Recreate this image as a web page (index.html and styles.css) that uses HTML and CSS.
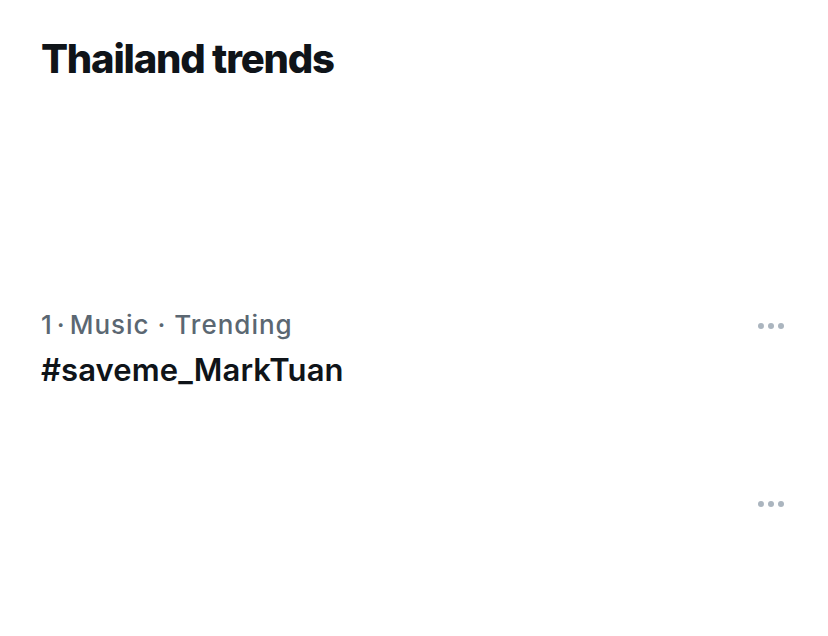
FILE: index.html
```html
<!DOCTYPE html>
<html lang="en">
<head>
<meta charset="utf-8">
<link rel="stylesheet" href="styles.css">
<title>Thailand trends</title>
</head>
<body>
<main class="panel">
  <h1 class="title">Thailand trends</h1>
  <div class="blank-row"></div>
  <div class="trend">
    <div class="trend-text">
      <div class="meta">1<span class="sep1">·</span>Music · Trending</div>
      <div class="name">#saveme_MarkTuan</div>
    </div>
    <span class="more"><i></i><i></i><i></i></span>
  </div>
  <div class="trend trend-faded">
    <div class="trend-text"></div>
    <span class="more"><i></i><i></i><i></i></span>
  </div>
</main>
</body>
</html>
```
FILE: styles.css
```css
html, body {
  margin: 0;
  padding: 0;
  background: #ffffff;
}
body {
  font-family: Inter, "Noto Sans", "Liberation Sans", sans-serif;
  color: #0f1419;
}
.panel {
  width: 828px;
  height: 636px;
  box-sizing: border-box;
  padding: 36px 44px 0 41px;
  display: flex;
  flex-direction: column;
}
.title {
  margin: 0;
  font-size: 40px;
  font-weight: 800;
  letter-spacing: -1.2px;
  line-height: 46px;
  color: #0f1419;
}
.blank-row {
  height: 226px;
}
.trend {
  display: flex;
  justify-content: space-between;
  align-items: flex-start;
}
.trend-text {
  display: flex;
  flex-direction: column;
}
.meta {
  font-size: 26px;
  line-height: 34px;
  letter-spacing: 1px;
  color: #5b6772;
  font-weight: 500;
}
.sep1 {
  margin: 0 4px;
}
.name {
  margin-top: 5px;
  font-size: 31px;
  line-height: 46px;
  font-weight: 600;
  letter-spacing: 0.1px;
  color: #0f1419;
}
.more {
  display: flex;
  gap: 4px;
  padding-top: 15px;
}
.more i {
  display: block;
  width: 6px;
  height: 6px;
  border-radius: 50%;
  background: #abb5bf;
}
.trend-faded {
  margin-top: 93px;
}
```
